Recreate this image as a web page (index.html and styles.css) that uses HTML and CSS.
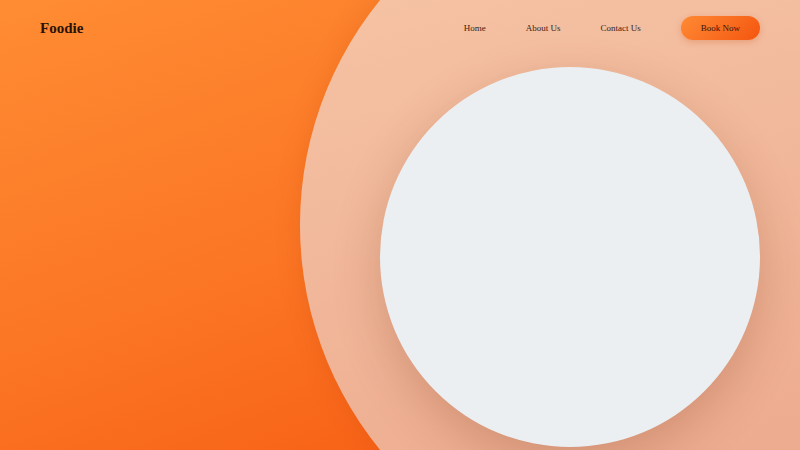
FILE: index.html
```html
<!DOCTYPE html>
<html>
<head>
<meta charset="utf-8">
<link rel="stylesheet" href="styles.css">
</head>
<body>
<div class="page">
  <div class="backdrop"></div>
  <header class="header">
    <div class="logo">Foodie</div>
    <nav class="nav">
      <a class="nav-link" href="#">Home</a>
      <a class="nav-link" href="#">About Us</a>
      <a class="nav-link" href="#">Contact Us</a>
      <a class="btn" href="#">Book Now</a>
    </nav>
  </header>
  <main class="hero">
    <div class="plate"></div>
  </main>
</div>
</body>
</html>
```
FILE: styles.css
```css
html, body {
  margin: 0;
  padding: 0;
}
body {
  font-family: "Liberation Serif", "Times New Roman", serif;
  overflow: hidden;
}
.page {
  position: relative;
  width: 800px;
  height: 450px;
  overflow: hidden;
  background: linear-gradient(160deg, #ff8c33 0%, #fb7524 50%, #f5560f 100%);
}
.backdrop {
  position: absolute;
  left: 300px;
  top: -131px;
  width: 712px;
  height: 712px;
  border-radius: 50%;
  background: linear-gradient(165deg, #f7c8a8 0%, #f1b699 50%, #eaa387 100%);
  box-shadow: 0 0 24px rgba(190, 70, 0, 0.22);
}
.header {
  position: relative;
  display: flex;
  align-items: center;
  justify-content: space-between;
  padding: 16px 40px;
  height: 24px;
}
.logo {
  font-size: 15px;
  font-weight: bold;
  color: #2a1208;
}
.nav {
  display: flex;
  align-items: center;
  gap: 40px;
}
.nav-link {
  font-size: 9px;
  color: #3b1e12;
  text-decoration: none;
}
.btn {
  display: flex;
  align-items: center;
  height: 24px;
  padding: 0 20px;
  border-radius: 12px;
  font-size: 9px;
  color: #3b1408;
  text-decoration: none;
  background: linear-gradient(135deg, #ff8a34, #f4550f);
  box-shadow: 0 2px 6px rgba(200, 70, 10, 0.25);
}
.hero {
  position: relative;
  display: flex;
  justify-content: flex-end;
  padding: 11px 40px 0 0;
}
.plate {
  width: 380px;
  height: 380px;
  border-radius: 50%;
  background: #ebeff2;
  box-shadow: 0 16px 48px rgba(110, 40, 10, 0.22);
}
```
